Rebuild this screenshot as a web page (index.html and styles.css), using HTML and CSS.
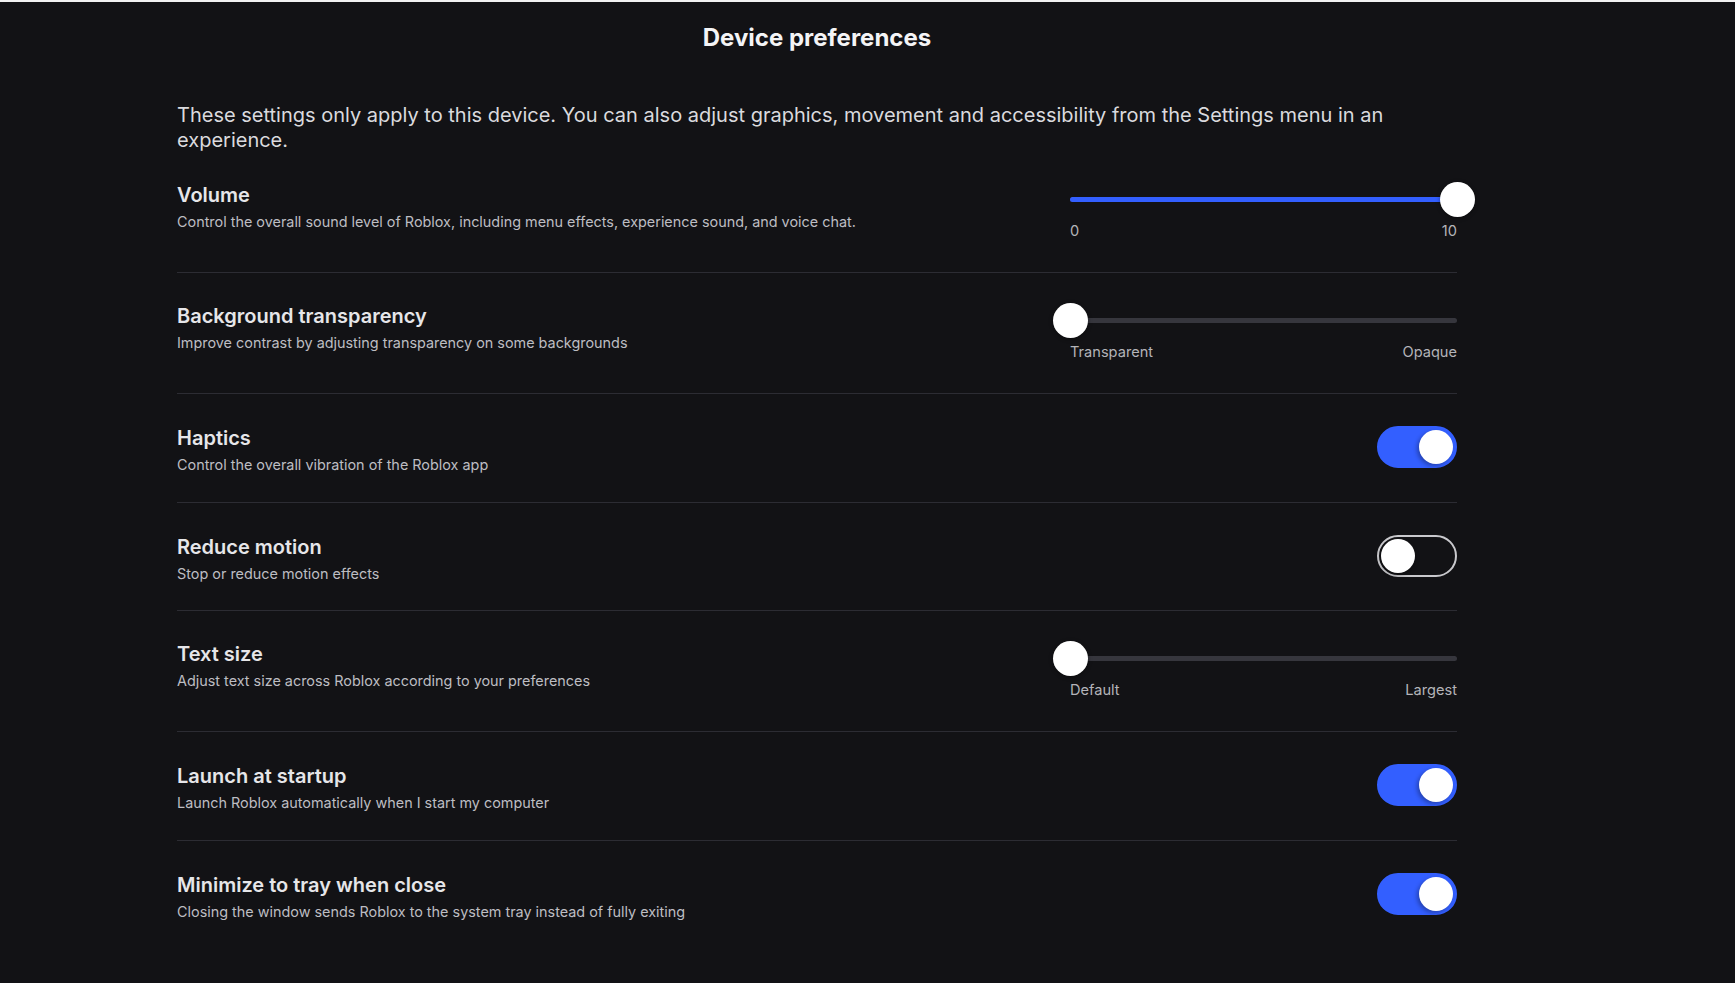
FILE: index.html
```html
<!DOCTYPE html>
<html lang="en">
  <head>
    <meta charset="UTF-8" />
    <meta name="viewport" content="width=device-width, initial-scale=1.0" />
    <title>Device preferences</title>
    <link rel="stylesheet" href="styles.css">
  </head>

  <body>
    <div class="page">
      <h1 class="page-title">Device preferences</h1>
      <p class="intro">
        These settings only apply to this device. You can also adjust graphics, movement and accessibility from the Settings menu in an experience.
      </p>

      <div class="setting slider-row">
        <div class="setting-text">
          <h3>Volume</h3>
          <p>Control the overall sound level of Roblox, including menu effects, experience sound, and voice chat.</p>
        </div>
        <div class="slider">
          <div class="track-area">
            <div class="track">
              <div class="fill" style="width: 100%"></div>
            </div>
            <div class="thumb" style="left: 100%"></div>
          </div>
          <div class="slider-labels"><span>0</span><span>10</span></div>
        </div>
      </div>

      <div class="setting slider-row">
        <div class="setting-text">
          <h3>Background transparency</h3>
          <p>Improve contrast by adjusting transparency on some backgrounds</p>
        </div>
        <div class="slider">
          <div class="track-area">
            <div class="track">
              <div class="fill" style="width: 0%"></div>
            </div>
            <div class="thumb" style="left: 0%"></div>
          </div>
          <div class="slider-labels"><span>Transparent</span><span>Opaque</span></div>
        </div>
      </div>

      <div class="setting toggle-row">
        <div class="setting-text">
          <h3>Haptics</h3>
          <p>Control the overall vibration of the Roblox app</p>
        </div>
        <div class="toggle on"><div class="knob"></div></div>
      </div>

      <div class="setting toggle-row">
        <div class="setting-text">
          <h3>Reduce motion</h3>
          <p>Stop or reduce motion effects</p>
        </div>
        <div class="toggle"><div class="knob"></div></div>
      </div>

      <div class="setting slider-row">
        <div class="setting-text">
          <h3>Text size</h3>
          <p>Adjust text size across Roblox according to your preferences</p>
        </div>
        <div class="slider">
          <div class="track-area">
            <div class="track">
              <div class="fill" style="width: 0%"></div>
            </div>
            <div class="thumb" style="left: 0%"></div>
          </div>
          <div class="slider-labels"><span>Default</span><span>Largest</span></div>
        </div>
      </div>

      <div class="setting toggle-row">
        <div class="setting-text">
          <h3>Launch at startup</h3>
          <p>Launch Roblox automatically when I start my computer</p>
        </div>
        <div class="toggle on"><div class="knob"></div></div>
      </div>

      <div class="setting toggle-row">
        <div class="setting-text">
          <h3>Minimize to tray when close</h3>
          <p>Closing the window sends Roblox to the system tray instead of fully exiting</p>
        </div>
        <div class="toggle on"><div class="knob"></div></div>
      </div>
    </div>
  </body>
</html>
```

FILE: styles.css
```css
html,
body {
  margin: 0;
  height: 100%;
}

body {
  background-color: #121215;
  border-top: 2px solid #f2f2f2;
  font-family: Inter, "Noto Sans", sans-serif;
  color: #e6e6e9;
}

.page {
  width: 1280px;
  margin-left: 177px;
}

.page-title {
  margin: 0;
  padding-top: 20px;
  font-size: 24px;
  line-height: 32px;
  font-weight: 700;
  text-align: center;
  color: #f4f4f6;
}

.intro {
  margin: 49px 0 0;
  font-size: 20px;
  line-height: 24.5px;
  color: #dadade;
}

/* one row per preference */
.setting {
  display: flex;
  justify-content: space-between;
  align-items: flex-start;
  border-bottom: 1px solid #2c2c33;
}
.setting:last-child {
  border-bottom: none;
}
.slider-row {
  padding: 31px 0 31px;
}
.toggle-row {
  padding: 32px 0 26.5px;
}

.setting-text h3 {
  margin: 0;
  font-size: 20px;
  line-height: 24px;
  font-weight: 600;
  color: #e6e6e9;
}
.setting-text p {
  margin: 4px 0 0;
  font-size: 14.4px;
  line-height: 21px;
  color: #bdbdc2;
}

/* sliders */
.slider {
  width: 387px;
  margin-top: -1px;
}
.track-area {
  position: relative;
  height: 35px;
  display: flex;
  align-items: center;
}
.track {
  width: 100%;
  height: 5px;
  border-radius: 3px;
  background-color: #36363d;
}
.fill {
  height: 100%;
  border-radius: 3px;
  background-color: #335fff;
}
.thumb {
  position: absolute;
  top: 0;
  width: 35px;
  height: 35px;
  margin-left: -17.5px;
  border-radius: 50%;
  background-color: #fff;
  box-shadow: 0 1px 4px rgba(0, 0, 0, 0.4);
}
.slider-labels {
  display: flex;
  justify-content: space-between;
  margin-top: 4px;
  font-size: 14.6px;
  line-height: 20px;
  color: #b4b4b9;
}

/* toggles */
.toggle {
  box-sizing: border-box;
  width: 80px;
  height: 42px;
  padding: 2px;
  border: 2px solid #c9c9cd;
  border-radius: 21px;
  display: flex;
  align-items: center;
}
.toggle.on {
  border-color: #335fff;
  background-color: #335fff;
  justify-content: flex-end;
}
.knob {
  width: 34px;
  height: 34px;
  border-radius: 50%;
  background-color: #fff;
  box-shadow: 0 2px 4px rgba(0, 0, 0, 0.35);
}
.toggle.on .knob {
  box-shadow: -2px 2px 4px rgba(0, 0, 0, 0.3);
}
```
